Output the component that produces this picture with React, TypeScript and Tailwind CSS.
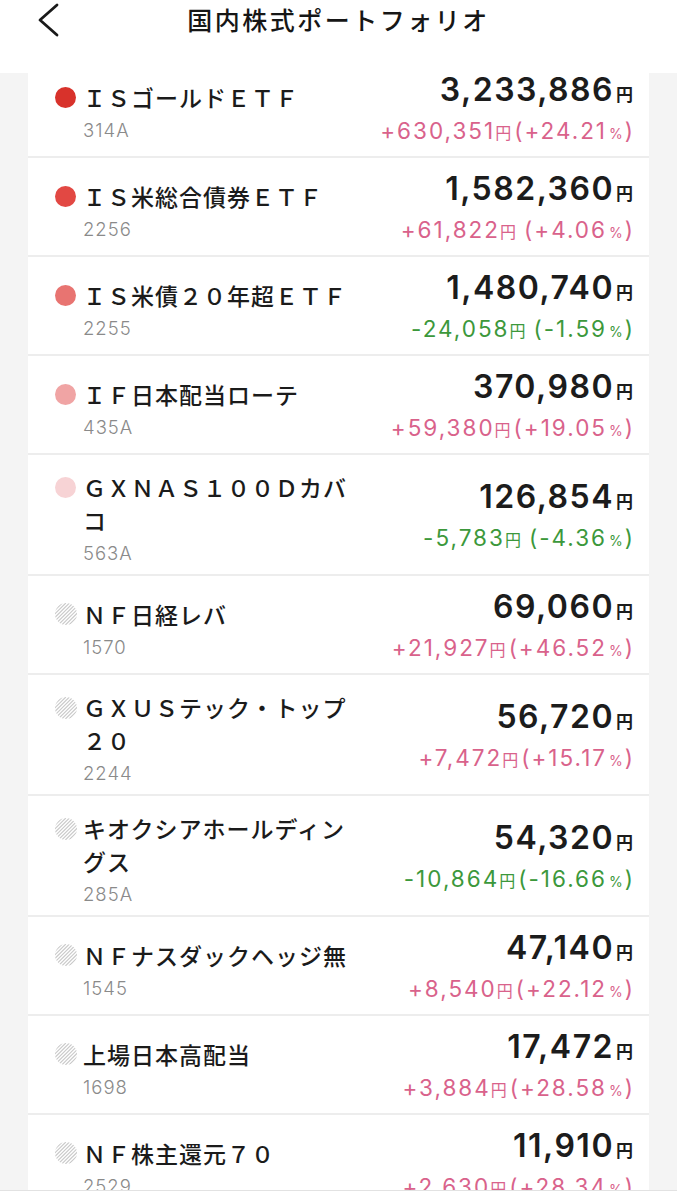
import React from "react";

type Row = {
  name: string;
  code: string;
  amount: string;
  diff: string;
  pct: string;
  neg?: boolean;
  space?: boolean;
  dot?: string;
};

const rows: Row[] = [
  { name: "ＩＳゴールドＥＴＦ", code: "314A", amount: "3,233,886", diff: "+630,351", pct: "+24.21", dot: "#d8322b" },
  { name: "ＩＳ米総合債券ＥＴＦ", code: "2256", amount: "1,582,360", diff: "+61,822", pct: "+4.06", space: true, dot: "#e24843" },
  { name: "ＩＳ米債２０年超ＥＴＦ", code: "2255", amount: "1,480,740", diff: "-24,058", pct: "-1.59", neg: true, space: true, dot: "#e87471" },
  { name: "ＩＦ日本配当ローテ", code: "435A", amount: "370,980", diff: "+59,380", pct: "+19.05", dot: "#f0a4a4" },
  { name: "ＧＸＮＡＳ１００Ｄカバコ", code: "563A", amount: "126,854", diff: "-5,783", pct: "-4.36", neg: true, space: true, dot: "#f7d3d5" },
  { name: "ＮＦ日経レバ", code: "1570", amount: "69,060", diff: "+21,927", pct: "+46.52" },
  { name: "ＧＸＵＳテック・トップ２０", code: "2244", amount: "56,720", diff: "+7,472", pct: "+15.17" },
  { name: "キオクシアホールディングス", code: "285A", amount: "54,320", diff: "-10,864", pct: "-16.66", neg: true },
  { name: "ＮＦナスダックヘッジ無", code: "1545", amount: "47,140", diff: "+8,540", pct: "+22.12" },
  { name: "上場日本高配当", code: "1698", amount: "17,472", diff: "+3,884", pct: "+28.58" },
  { name: "ＮＦ株主還元７０", code: "2529", amount: "11,910", diff: "+2,630", pct: "+28.34" },
];

function Hatch() {
  const lines = [];
  for (let k = -22; k <= 22; k += 3.6) {
    lines.push(<line key={k} x1={k} y1={22} x2={k + 22} y2={0} stroke="#c9c9c9" strokeWidth={1.1} />);
  }
  return (
    <svg width="22" height="22" viewBox="0 0 22 22">
      <defs>
        <clipPath id="hc">
          <circle cx="11" cy="11" r="11" />
        </clipPath>
      </defs>
      <g clipPath="url(#hc)">{lines}</g>
    </svg>
  );
}

function Item({ r }: { r: Row }) {
  const color = r.neg ? "text-[#3c983b]" : "text-[#d9628b]";
  return (
    <div className="flex items-center justify-between min-h-[99px] border-b-2 border-[#ededed] pl-[27px] pr-[16px]">
      <div className="flex gap-[6px] pt-[16px] pb-[9px]">
        <div className="h-[33px] w-[22px] flex items-center shrink-0">
          {r.dot ? (
            <div className="w-[21px] h-[21px] rounded-full" style={{ backgroundColor: r.dot }} />
          ) : (
            <Hatch />
          )}
        </div>
        <div className="flex flex-col">
          <div className="max-w-[272px] text-[23px] leading-[33px] tracking-[1px] font-medium text-[#1b1b1b] font-['Noto_Sans_CJK_JP',sans-serif]">
            {r.name}
          </div>
          <div className="mt-[4px] text-[18.5px] leading-[24px] tracking-[1px] font-light text-[#8a8a8a] font-['Inter',sans-serif]">
            {r.code}
          </div>
        </div>
      </div>
      <div className="flex flex-col items-end pt-[6px] shrink-0">
        <div className="leading-[40px] whitespace-nowrap">
          <span className="text-[32px] font-semibold tracking-[1.5px] text-[#1c1c1c] font-['Inter',sans-serif]">
            {r.amount}
          </span>
          <span className="ml-[2px] text-[17px] font-bold text-[#1c1c1c] font-['Noto_Sans_CJK_JP',sans-serif]">円</span>
        </div>
        <div className={`-mt-[1px] leading-[34px] whitespace-nowrap ${color} font-['Inter',sans-serif]`}>
          <span className="text-[22.5px] tracking-[2px]">{r.diff}</span>
          <span className="text-[16px] font-['Noto_Sans_CJK_JP',sans-serif]">円</span>
          <span className={`text-[22.5px] ${r.space ? "ml-[8px]" : "ml-[3px]"}`}>(</span>
          <span className="text-[22.5px] tracking-[2px] ml-[2px]">{r.pct}</span>
          <span className="text-[14px] mx-[2px]">%</span>
          <span className="text-[22.5px]">)</span>
        </div>
      </div>
    </div>
  );
}

export default function App() {
  return (
    <div className="w-[677px] h-[1200px] flex flex-col overflow-hidden bg-[#f4f4f4]">
      <header className="h-[73px] shrink-0 bg-white grid grid-cols-[1fr_auto_1fr]">
        <div className="pl-[37px] pt-[3px]">
          <svg width="24" height="34" viewBox="0 0 24 34">
            <path d="M20 2 L3 17 L20 32" fill="none" stroke="#1a1a1a" strokeWidth="2.8" strokeLinecap="round" strokeLinejoin="round" />
          </svg>
        </div>
        <div className="h-[40px] flex items-center text-[25px] tracking-[2.5px] font-medium text-[#161616] font-['Noto_Sans_CJK_JP',sans-serif]">
          国内株式ポートフォリオ
        </div>
        <div />
      </header>
      <main className="flex-1 overflow-hidden">
        <div className="mx-[28px] bg-white -mt-[14px]">
          {rows.map((r) => (
            <Item key={r.code} r={r} />
          ))}
        </div>
      </main>
      <footer className="h-[10px] shrink-0 bg-white border-t border-[#e2e2e2]" />
    </div>
  );
}
